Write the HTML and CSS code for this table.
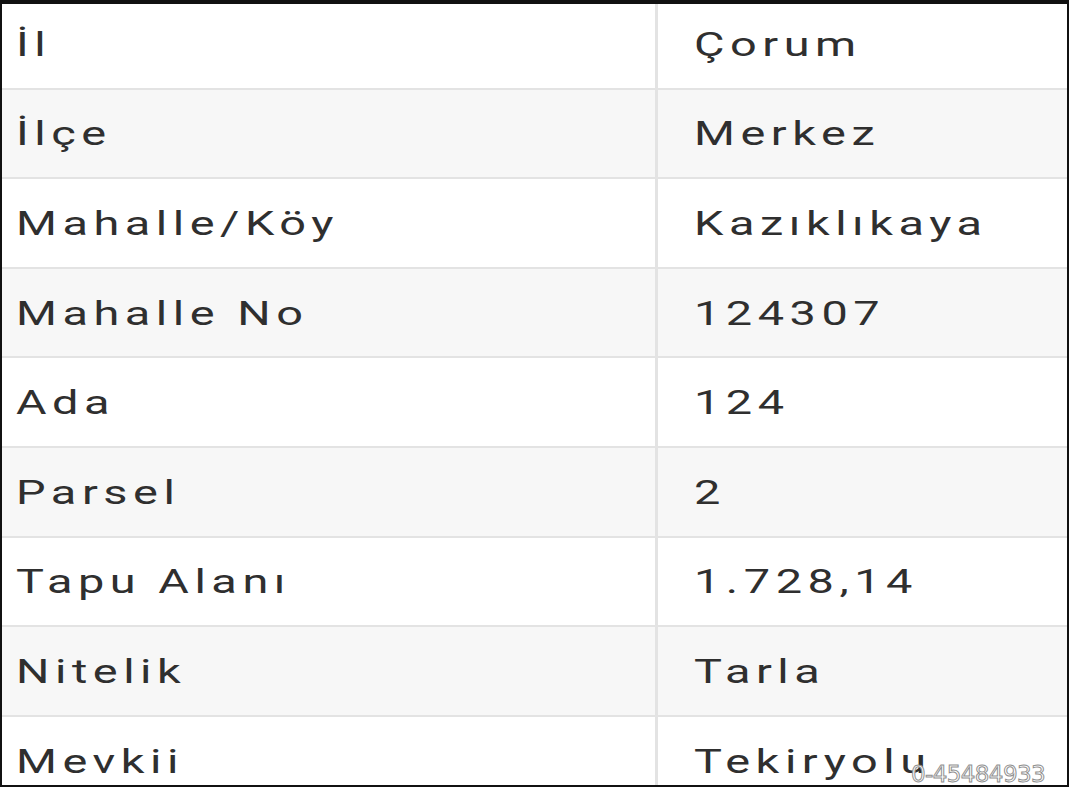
FILE: index.html
```html
<!DOCTYPE html>
<html lang="tr">
<head>
<meta charset="utf-8">
<title>Tapu Bilgileri</title>
<link rel="stylesheet" href="styles.css">
</head>
<body>
<div class="frame">
  <div class="table">
    <div class="row"><div class="cell key"><span class="txt">İl</span></div><div class="cell val"><span class="txt">Çorum</span></div></div>
    <div class="row alt"><div class="cell key"><span class="txt">İlçe</span></div><div class="cell val"><span class="txt">Merkez</span></div></div>
    <div class="row"><div class="cell key"><span class="txt">Mahalle/Köy</span></div><div class="cell val"><span class="txt">Kazıklıkaya</span></div></div>
    <div class="row alt"><div class="cell key"><span class="txt">Mahalle No</span></div><div class="cell val"><span class="txt">124307</span></div></div>
    <div class="row"><div class="cell key"><span class="txt">Ada</span></div><div class="cell val"><span class="txt">124</span></div></div>
    <div class="row alt"><div class="cell key"><span class="txt">Parsel</span></div><div class="cell val"><span class="txt">2</span></div></div>
    <div class="row"><div class="cell key"><span class="txt">Tapu Alanı</span></div><div class="cell val"><span class="txt">1.728,14</span></div></div>
    <div class="row alt"><div class="cell key"><span class="txt">Nitelik</span></div><div class="cell val"><span class="txt">Tarla</span></div></div>
    <div class="row"><div class="cell key"><span class="txt">Mevkii</span></div><div class="cell val"><span class="txt">Tekiryolu</span></div></div>
  </div>
  <div class="watermark">0-45484933</div>
</div>
</body>
</html>
```
FILE: styles.css
```css
html, body {
  margin: 0;
  padding: 0;
  background: #ffffff;
}
body {
  width: 1069px;
  height: 787px;
  overflow: hidden;
  font-family: Roboto, "Liberation Sans", sans-serif;
}
.frame {
  position: relative;
  width: 1069px;
  height: 787px;
  overflow: hidden;
}
.frame::after {
  content: "";
  position: absolute;
  inset: 0;
  border-top: 4px solid #111;
  border-left: 2px solid #111;
  border-right: 2px solid #111;
  border-bottom: 2px solid #111;
  pointer-events: none;
}
.table {
  display: flex;
  flex-direction: column;
}
.row {
  display: grid;
  grid-template-columns: 658px 1fr;
  height: 89.6px;
  flex: none;
  box-sizing: border-box;
  border-bottom: 2px solid #e3e3e3;
  background: #ffffff;
}
.row.alt {
  background: #f7f7f7;
}
.cell {
  display: flex;
  align-items: center;
  font-size: 33px;
  font-weight: 400;
  color: #2f2f2f;
  white-space: nowrap;
}
.txt {
  display: inline-block;
  letter-spacing: 3.9px;
  transform: scaleX(1.42);
  transform-origin: left center;
  margin-top: 1px;
}
.key {
  padding-left: 16px;
  border-right: 3px solid #e3e3e3;
}
.val {
  padding-left: 36px;
}
.watermark {
  position: absolute;
  left: 911px;
  top: 761px;
  font-family: "DejaVu Sans", sans-serif;
  font-size: 23px;
  color: #ffffff;
  -webkit-text-stroke: 1px #8f8f8f;
  letter-spacing: -0.6px;
}
```
